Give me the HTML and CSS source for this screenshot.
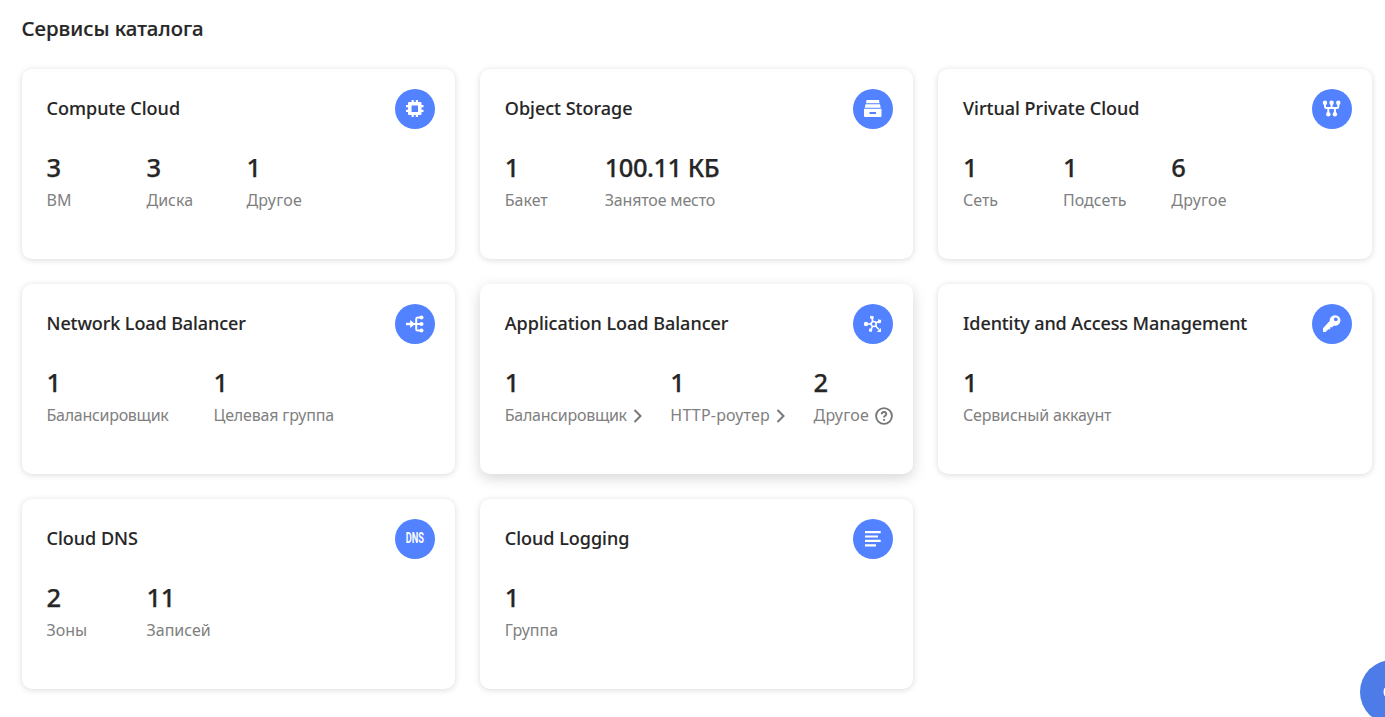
FILE: index.html
```html
<!DOCTYPE html>
<html lang="ru">
<head>
<meta charset="utf-8">
<title>Сервисы каталога</title>
<link rel="stylesheet" href="styles.css">
</head>
<body>
<main class="page">
<h1 class="heading">Сервисы каталога</h1>
<section class="grid">
<article class="card">
<header class="card-head"><h2 class="name">Compute Cloud</h2>
<svg class="icon" viewBox="0 0 40 40"><circle cx="20" cy="20" r="20"/><path class="w" fill-rule="evenodd" d="M16.600 11h2.200v2h2v-2h2.200v2h2.500q1 0 1 1v2h2v2.200h-2v2.600h2V23h-2v2q0 1-1 1H23v2h-2.200v-2h-2v2h-2.200v-2H14q-1 0-1-1v-2h-2v-2.200h2v-2.600h-2V16h2v-2q0-1 1-1h2.600zM16.600 16.500v6.500h6.400v-6.500z"/></svg></header>
<dl class="stats"><div class="stat"><dd>3</dd><dt>ВМ</dt></div><div class="stat"><dd>3</dd><dt>Диска</dt></div><div class="stat"><dd>1</dd><dt class="other">Другое</dt></div></dl>
</article>
<article class="card">
<header class="card-head"><h2 class="name">Object Storage</h2>
<svg class="icon" viewBox="0 0 40 40"><circle cx="20" cy="20" r="20"/><path class="w" fill-rule="evenodd" d="M13.500 11h12.500l.5 3.200h-13.500zM12.500 15.200h14.500l.7 3.500H11.800zM11 19.800h17.500v7.200a1 1 0 0 1-1 1H12a1 1 0 0 1-1-1V19.800zM16.500 23v2h6.500v-2z"/></svg></header>
<dl class="stats"><div class="stat"><dd>1</dd><dt>Бакет</dt></div><div class="stat"><dd class="size">100.11 КБ</dd><dt class="tight">Занятое место</dt></div></dl>
</article>
<article class="card">
<header class="card-head"><h2 class="name">Virtual Private Cloud</h2>
<svg class="icon" viewBox="0 0 40 40"><circle cx="20" cy="20" r="20"/><path class="l" d="M13 14v3.700q0 1.300 1.300 1.300h10.700q1.300 0 1.300-1.300V14M19.600 14v5M16.300 19v6M22.900 19v6"/><g class="w"><circle cx="13" cy="13.800" r="2.200"/><circle cx="19.600" cy="13.800" r="2.200"/><circle cx="26.300" cy="13.800" r="2.200"/><circle cx="16.300" cy="25.300" r="2.200"/><circle cx="22.900" cy="25.300" r="2.200"/></g></svg></header>
<dl class="stats"><div class="stat"><dd>1</dd><dt>Сеть</dt></div><div class="stat"><dd>1</dd><dt>Подсеть</dt></div><div class="stat"><dd>6</dd><dt class="other">Другое</dt></div></dl>
</article>
<article class="card">
<header class="card-head"><h2 class="name snug">Network Load Balancer</h2>
<svg class="icon" viewBox="0 0 40 40"><circle cx="20" cy="20" r="20"/><path class="w" d="M11 18.700h4.200V16l5 4-5 4v-2.700H11z"/><path class="l" d="M26.500 13.500h-4q-1.300 0-1.300 1.500v10q0 1.500 1.300 1.500h4M19 20h7.500"/><g class="w"><circle cx="26.500" cy="13.500" r="2"/><circle cx="26.500" cy="20" r="2"/><circle cx="26.500" cy="26.500" r="2"/></g></svg></header>
<dl class="stats"><div class="stat"><dd>1</dd><dt class="balancer">Балансировщик</dt></div><div class="stat"><dd>1</dd><dt class="tight">Целевая группа</dt></div></dl>
</article>
<article class="card raised">
<header class="card-head"><h2 class="name">Application Load Balancer</h2>
<svg class="icon" viewBox="0 0 40 40"><circle cx="20" cy="20" r="20"/><path class="t" d="M13 20h5M19.800 17.500L19 14M23 18.800L26 17.500M19.500 22.500L18 25.500M22.500 22L26 25.500"/><circle class="t" cx="20.700" cy="20" r="2.500"/><g class="w"><circle cx="13" cy="20" r="2.200"/><path d="M17 14.500l.3-2.800 3.300.5v2.800zM25 15.300l3.200.8-.4 2.800-2.600.3zM16.500 24.300l3 1.200-1 2.500-2.700-.8zM28 24v4h-4.300z"/></g></svg></header>
<dl class="stats"><div class="stat"><dd>1</dd><dt class="balancer">Балансировщик<svg class="chevron" viewBox="0 0 10 14"><path d="M1.500 1l6 6-6 6"/></svg></dt></div><div class="stat"><dd>1</dd><dt class="router">HTTP-роутер<svg class="chevron" viewBox="0 0 10 14"><path d="M1.500 1l6 6-6 6"/></svg></dt></div><div class="stat"><dd>2</dd><dt class="other">Другое<svg class="help" viewBox="0 0 18 18"><circle cx="9" cy="9" r="7.900"/><path d="M6.700 7.200Q6.800 5 9 5t2.300 2Q11.300 8.200 10 8.800 9 9.300 9 10.500M9 12v1.700"/></svg></dt></div></dl>
</article>
<article class="card">
<header class="card-head"><h2 class="name snug">Identity and Access Management</h2>
<svg class="icon" viewBox="0 0 40 40"><circle cx="20" cy="20" r="20"/><path class="w" fill-rule="evenodd" d="M22.800 11.200a5.300 5.300 0 1 1-1 10.400L20.200 23.200h-2v2h-2L13.700 28H11v-3.700l6.700-7.200a5.300 5.300 0 0 1 5.100-5.900zM23.800 13.500a1.900 1.900 0 1 0 .01 0z"/></svg></header>
<dl class="stats"><div class="stat"><dd>1</dd><dt class="tight">Сервисный аккаунт</dt></div></dl>
</article>
<article class="card">
<header class="card-head"><h2 class="name">Cloud DNS</h2>
<svg class="icon" viewBox="0 0 40 40"><circle cx="20" cy="20" r="20"/><text class="dns" x="10.800" y="24.300" textLength="18.200" lengthAdjust="spacingAndGlyphs">DNS</text></svg></header>
<dl class="stats"><div class="stat"><dd>2</dd><dt>Зоны</dt></div><div class="stat"><dd>11</dd><dt>Записей</dt></div></dl>
</article>
<article class="card">
<header class="card-head"><h2 class="name">Cloud Logging</h2>
<svg class="icon" viewBox="0 0 40 40"><circle cx="20" cy="20" r="20"/><path class="w" d="M12 12h15.700v2.200H12zM12 16.400h13v2.200H12zM12 20.800h15.700V23H12zM12 25.200h11v2.200H12z"/></svg></header>
<dl class="stats"><div class="stat"><dd>1</dd><dt>Группа</dt></div></dl>
</article>
</section>
</main>
<button class="chat" aria-label="Чат"><svg viewBox="0 0 64 64"><circle class="bubble" cx="32" cy="32" r="8.500"/></svg></button>
</body>
</html>
```
FILE: styles.css
```css
* { box-sizing: border-box; margin: 0; }
body { background: #fff; color: #262626; font-family: "Noto Sans", "Open Sans", sans-serif; height: 717px; overflow: hidden; }
.page { padding: 14px 13.300px 0 21.500px; }
.heading { font-size: 20.400px; line-height: 28px; font-weight: 500; -webkit-text-stroke: .2px; margin-bottom: 27px; }
.grid { display: grid; grid-template-columns: repeat(3, 1fr); grid-auto-rows: 190px; gap: 25px 24.600px; }
.card { border-radius: 10px; background: #fff; padding: 20px 20px 0 25px; box-shadow: 0 1px 6px rgba(0,0,0,.15); }
.raised { box-shadow: 0 4px 14px rgba(0,0,0,.17); }
.card-head { display: flex; justify-content: space-between; height: 40px; }
.name { font-size: 18px; line-height: 38px; font-weight: 500; -webkit-text-stroke: .1px; white-space: nowrap; }
.snug { letter-spacing: -.09px; }
.icon { width: 40px; height: 40px; fill: #5282ff; flex: none; }
.w { fill: #fff; }
.l { fill: none; stroke: #fff; stroke-width: 2; }
.t { fill: none; stroke: #fff; stroke-width: 1.600; }
.dns { fill: #fff; font: 700 14px Roboto, sans-serif; }
.stats { display: flex; gap: 45px; margin-top: 21px; }
.stat { display: flex; flex-direction: column; min-width: 55px; white-space: nowrap; }
.stat dd { font-size: 25.500px; line-height: 34px; font-weight: 500; -webkit-text-stroke: .25px; letter-spacing: -.4px; }
.stat .size { letter-spacing: -.5px; }
.stat dt { font-size: 16px; line-height: 24px; margin-top: 4px; color: #808080; display: flex; align-items: center; }
.stat .tight { letter-spacing: -.18px; }
.stat .balancer { letter-spacing: -.28px; }
.stat .router { letter-spacing: .2px; }
.stat .other { letter-spacing: .2px; }
.raised .stats { gap: 43.500px; }
.chevron { width: 10px; height: 14px; margin: 2px -16px 0 6px; fill: none; stroke: #777; stroke-width: 2; }
.help { width: 18px; height: 18px; margin: 2px -24px 0 6px; fill: none; stroke: #777; stroke-width: 1.900; }
.chat { position: absolute; left: 1360px; top: 660px; width: 64px; height: 64px; border: 0; border-radius: 50%; padding: 0; background: #4d7be8; }
.chat svg { display: block; width: 64px; height: 64px; }
.bubble { fill: #fff; }
```
